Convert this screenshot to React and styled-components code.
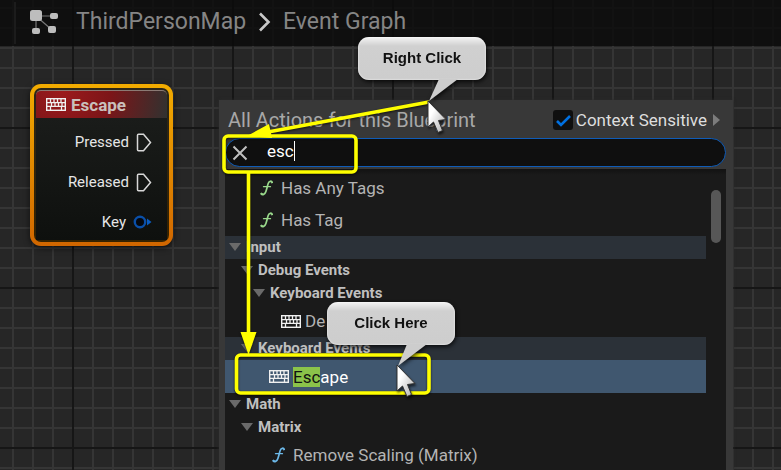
import React from "react";
import styled, { createGlobalStyle } from "styled-components";

const GlobalStyle = createGlobalStyle`
  *, *::before, *::after { box-sizing: border-box; }
  body { margin: 0; font-family: Roboto, "Open Sans", sans-serif; background: #262626; }
`;

/* ---------- Graph canvas ---------- */

const Canvas = styled.main`
  position: relative;
  min-height: 100vh;
  overflow: hidden;
  background-color: #262626;
  background-image:
    linear-gradient(to right, #161616 2px, transparent 2px),
    linear-gradient(to bottom, #161616 2px, transparent 2px),
    linear-gradient(to right, #353535 2px, transparent 2px),
    linear-gradient(to bottom, #353535 2px, transparent 2px);
  background-size: 160px 160px, 160px 160px, 20px 20px, 20px 20px;
  background-position: 72px 0, 0 127px, 12px 0, 0 7px;
`;

const TopBar = styled.header`
  display: flex;
  align-items: center;
  height: 46px;
  padding: 0 14px;
  background: rgba(10, 10, 10, 0.8);
`;

const Divider = styled.span`
  width: 2px;
  height: 42px;
  margin-right: 14px;
  background: #1c1c1c;
`;

const Crumbs = styled.nav`
  display: flex;
  align-items: center;
  gap: 12px;
  margin-left: 18px;
  padding-bottom: 2px;
  font-size: 23px;
  line-height: 28px;
  color: #858585;
`;

/* ---------- Event node ---------- */

const Node = styled.section`
  position: absolute;
  left: 30px;
  top: 84px;
  width: 143px;
  padding: 4px;
  border-radius: 11px;
  background: linear-gradient(#f2ac00, #d06600);
  box-shadow: 0 2px 6px rgba(0, 0, 0, 0.6);
`;

const NodeBody = styled.div`
  overflow: hidden;
  padding: 2px;
  border-radius: 7px;
  background: linear-gradient(#2b2618, #352200);
`;

const NodeTitle = styled.h2`
  display: flex;
  align-items: center;
  gap: 5px;
  height: 28px;
  margin: 0;
  padding: 0 10px;
  border-top: 1px solid #8b7a74;
  border-radius: 5px 5px 0 0;
  background: radial-gradient(circle at 20% 0, #9c1a1c, #7c1518 45%, #303230 100%);
  color: #c9c0bc;
  font-size: 17px;
  line-height: 20px;
`;

const Pins = styled.ul`
  display: flex;
  flex-direction: column;
  gap: 20px;
  margin: 0;
  padding: 14px 15px 8px 8px;
  list-style: none;
  background: linear-gradient(#1a1c1a, #0e100e);
`;

const Pin = styled.li`
  display: flex;
  align-items: center;
  justify-content: flex-end;
  gap: 7px;
  height: 20px;
  color: #e6e6e6;
  font-size: 15px;
  line-height: 20px;
`;

/* ---------- Action menu ---------- */

const Menu = styled.section`
  position: absolute;
  left: 219px;
  right: 48px;
  top: 100px;
  bottom: 0;
  display: flex;
  flex-direction: column;
  padding: 0 7px 0 6px;
  background: #383838;
  box-shadow: 0 0 3px #2a2a2a;
`;

const MenuHeader = styled.div`
  display: flex;
  align-items: center;
  height: 38px;
  padding: 2px 6px 0 3px;
`;

const MenuTitle = styled.h1`
  flex: 1;
  margin: 0;
  color: #a8a8a8;
  font-size: 20px;
  font-weight: 400;
  line-height: 24px;
  white-space: nowrap;
`;

const CheckLabel = styled.label`
  display: flex;
  align-items: center;
  gap: 3px;
  color: #dedede;
  font-size: 17px;
  line-height: 20px;
  white-space: nowrap;
`;

const Check = styled.input`
  appearance: none;
  width: 20px;
  height: 20px;
  margin: 0;
  border-radius: 3px;
  background: #0f0f0f;
  &:checked {
    background: #0f0f0f url("data:image/svg+xml,%3Csvg xmlns='http://www.w3.org/2000/svg' viewBox='0 0 20 20'%3E%3Cpath d='M4 11l4 4 9-9' fill='none' stroke='%230070e0' stroke-width='2.6'/%3E%3C/svg%3E");
  }
`;

const IconButton = styled.button`
  display: flex;
  align-items: center;
  justify-content: center;
  padding: 0;
  border: 0;
  background: none;
`;

const MoreButton = styled(IconButton)`
  margin-left: 6px;
`;

const Search = styled.label`
  display: flex;
  align-items: center;
  height: 29px;
  padding: 0 6px;
  border: 1px solid #0f5cb8;
  border-radius: 15px;
  background: #0f0f0f;
  cursor: text;
`;

const SearchField = styled.span`
  display: flex;
  align-items: center;
  margin-left: 19px;
  padding-bottom: 3px;
`;

const SearchInput = styled.input`
  field-sizing: content;
  padding: 0;
  border: 0;
  outline: 0;
  background: none;
  color: #fff;
  font-family: inherit;
  font-size: 17px;
  line-height: 20px;
`;

const Caret = styled.span`
  width: 1px;
  height: 20px;
  background: #fff;
`;

const ListArea = styled.div`
  display: flex;
  flex: 1;
  min-height: 0;
  margin-top: 2px;
  background: linear-gradient(#121212, #1a1a1a 6px);
`;

const Tree = styled.ul`
  flex: 1;
  height: 100%;
  margin: 0;
  padding: 3px 0 0;
  overflow: hidden;
  list-style: none;
`;

const Category = styled.li`
  display: flex;
  align-items: center;
  gap: 5px;
  height: 23px;
  padding-bottom: 1px;
  padding-left: ${(p) => 4 + p.$level * 12}px;
  background: ${(p) => (p.$shaded ? "#2b3138" : "none")};
  color: #bfbfbf;
  font-size: 15px;
  font-weight: 700;
  line-height: 20px;
`;

const Action = styled.li`
  display: flex;
  align-items: center;
  gap: 4px;
  height: ${(p) => (p.$selected ? 33 : 32)}px;
  padding-left: ${(p) => 32 + p.$level * 12}px;
  background: ${(p) => (p.$selected ? "#40576f" : "none")};
  color: ${(p) => (p.$selected ? "#fff" : "#b4b4b4")};
  font-size: 17px;
  line-height: 20px;
  white-space: nowrap;
`;

const Match = styled.mark`
  background: #8bc34a;
  color: #111;
`;

const ScrollTrack = styled.div`
  width: 20px;
  padding: 21px 5px 0;
`;

const ScrollThumb = styled.div`
  width: 10px;
  height: 53px;
  border-radius: 5px;
  background: #575757;
`;

/* ---------- Tutorial annotations ---------- */

const Marks = styled.svg`
  position: absolute;
  left: 0;
  top: 0;
  pointer-events: none;
  filter: drop-shadow(0 1px 1px rgba(0, 0, 0, 0.7));
`;

const Bubble = styled.div`
  position: absolute;
  left: ${(p) => p.$x}px;
  top: ${(p) => p.$y}px;
  width: 128px;
  height: 43px;
  border-radius: 11px;
  background: linear-gradient(#f4f4f4, #d0d0d0 9px, #cdcdcd);
  box-shadow: inset 0 0 2px #fff;
  filter: drop-shadow(1px 2px 2px rgba(0, 0, 0, 0.75));
  color: #111;
  font-family: "Liberation Sans", Arial, sans-serif;
  font-size: 15px;
  font-weight: 700;
  line-height: 41px;
  text-align: center;
`;

const Tail = styled.svg`
  position: absolute;
  left: ${(p) => p.$x}px;
  top: 42px;
`;

const Pointer = styled.svg`
  position: absolute;
  left: ${(p) => p.$x}px;
  top: ${(p) => p.$y}px;
  filter: drop-shadow(1px 2px 1px rgba(0, 0, 0, 0.6));
`;

/* ---------- Icons ---------- */

function GraphIcon() {
  return (
    <svg width="28" height="26" viewBox="0 0 28 26" fill="#bdbdbd">
      <path d="M6 6h18M6 6v15M6 6l16 14" stroke="#777" strokeWidth="1.2" fill="none" />
      <rect x="0" y="0" width="12" height="11" rx="2.5" />
      <rect x="20" y="3" width="8" height="6" rx="2" />
      <rect x="2" y="18" width="8" height="6" rx="2" />
      <rect x="18" y="16" width="8" height="7" rx="2" />
    </svg>
  );
}

function KeyboardIcon() {
  return (
    <svg width="20" height="13" viewBox="0 0 20 13" fill="none" stroke="#f0f0f0">
      <rect x="0.7" y="0.7" width="18.6" height="11.6" strokeWidth="1.4" />
      <path
        d="M1 4.600H19M1 8.400H19M4.500 1V4.500M8 1V4.500M11.500 1V4.500M15 1V4.500M5.500 4.500V8.500M9 4.500V8.500M12.500 4.500V8.500M16 4.500V8.500M4.500 8.500V12M15.500 8.500V12"
        strokeWidth="1.3"
      />
    </svg>
  );
}

function FunctionIcon({ tone }) {
  return (
    <svg width="20" height="18" viewBox="0 0 20 18" fill="none" stroke={tone} strokeLinecap="round">
      <path d="M15.200 3.300C14.600 1.700 12.200 1.800 11.300 4.200C10.400 6.500 9.800 10 8.800 12.800C7.900 15.500 5.400 16.300 4.200 14.900" strokeWidth="1.7" />
      <path d="M6.500 7.700H13.500" strokeWidth="1.3" />
      <circle cx="14.800" cy="3.400" r="0.6" strokeWidth="1" />
      <circle cx="4.500" cy="14.700" r="0.6" strokeWidth="1" />
    </svg>
  );
}

function ExecPin() {
  return (
    <svg width="16" height="19" viewBox="0 0 16 19">
      <path d="M1.5 2.2q0-1 1-1H7.5L14.5 9.5 7.5 17.8H2.5q-1 0-1-1z" fill="none" stroke="#d8d8d8" strokeWidth="1.5" />
    </svg>
  );
}

function KeyPin() {
  return (
    <svg width="19" height="14" viewBox="0 0 19 14">
      <circle cx="7" cy="7" r="5.2" fill="#05080e" stroke="#0a4fa8" strokeWidth="2.4" />
      <path d="M14 3.500L18.500 7L14 10.500z" fill="#0a5cc0" />
    </svg>
  );
}

function DownTriangle() {
  return (
    <svg width="12" height="8" viewBox="0 0 12 8">
      <path d="M0 0h12L6 8z" fill="#6a6a6a" />
    </svg>
  );
}

function PointerIcon({ x, y }) {
  return (
    <Pointer $x={x} $y={y} width="22" height="35" viewBox="0 0 22 35">
      <defs>
        <linearGradient id="pointer-fill" x1="0" y1="0" x2="1" y2="1">
          <stop offset="0.3" stopColor="#fff" />
          <stop offset="0.8" stopColor="#c4c4c4" />
        </linearGradient>
      </defs>
      <path d="M1 1V27L6.500 22L11 32.500L15.500 30.500L11.500 20.500L19 19.500Z" fill="url(#pointer-fill)" stroke="#333" strokeWidth="1" />
    </Pointer>
  );
}

function Callout({ x, y, tailX, points, children }) {
  return (
    <Bubble $x={x} $y={y}>
      {children}
      <Tail $x={tailX} width="30" height="23" viewBox="0 0 30 23">
        <path d={points} fill="#cdcdcd" />
      </Tail>
    </Bubble>
  );
}

/* ---------- Data ---------- */

const rows = [
  { text: "Has Any Tags", level: 0, tone: "#9ad98c" },
  { text: "Has Tag", level: 0, tone: "#9ad98c" },
  { text: "Input", level: 0, category: true, shaded: true },
  { text: "Debug Events", level: 1, category: true },
  { text: "Keyboard Events", level: 2, category: true },
  { text: "De", level: 2 },
  { text: "Keyboard Events", level: 1, category: true, shaded: true },
  { match: "Esc", text: "ape", level: 1, selected: true },
  { text: "Math", level: 0, category: true },
  { text: "Matrix", level: 1, category: true },
  { text: "Remove Scaling (Matrix)", level: 1, tone: "#6cb8e8" },
];

function Row({ row }) {
  if (row.category) {
    return (
      <Category $level={row.level} $shaded={row.shaded}>
        <DownTriangle />
        {row.text}
      </Category>
    );
  }
  return (
    <Action $level={row.level} $selected={row.selected}>
      {row.tone ? <FunctionIcon tone={row.tone} /> : <KeyboardIcon />}
      <span>
        {row.match && <Match>{row.match}</Match>}
        {row.text}
      </span>
    </Action>
  );
}

export default function App() {
  return (
    <Canvas>
      <GlobalStyle />
      <TopBar>
        <Divider />
        <GraphIcon />
        <Crumbs aria-label="Breadcrumb">
          <span>ThirdPersonMap</span>
          <svg width="13" height="20" viewBox="0 0 13 20">
            <path d="M2 1.500L10.500 10L2 18.500" fill="none" stroke="#c8c8c8" strokeWidth="2.6" />
          </svg>
          <span>Event Graph</span>
        </Crumbs>
      </TopBar>

      <Node>
        <NodeBody>
          <NodeTitle>
            <KeyboardIcon />
            Escape
          </NodeTitle>
          <Pins>
            <Pin>Pressed<ExecPin /></Pin>
            <Pin>Released<ExecPin /></Pin>
            <Pin>Key<KeyPin /></Pin>
          </Pins>
        </NodeBody>
      </Node>

      <Menu>
        <MenuHeader>
          <MenuTitle>All Actions for this Blueprint</MenuTitle>
          <CheckLabel>
            <Check type="checkbox" defaultChecked />
            Context Sensitive
          </CheckLabel>
          <MoreButton aria-label="More options">
            <svg width="7" height="12" viewBox="0 0 7 12">
              <path d="M0 0L7 6L0 12z" fill="#7c7c7c" />
            </svg>
          </MoreButton>
        </MenuHeader>
        <Search>
          <IconButton aria-label="Clear search">
            <svg width="16" height="16" viewBox="0 0 16 16">
              <path d="M1.500 1.500L14.500 14.500M14.500 1.500L1.500 14.500" stroke="#c0c0c0" strokeWidth="2" />
            </svg>
          </IconButton>
          <SearchField>
            <SearchInput aria-label="Search actions" defaultValue="esc" />
            <Caret />
          </SearchField>
        </Search>
        <ListArea>
          <Tree>
            {rows.map((row, i) => (
              <Row key={i} row={row} />
            ))}
          </Tree>
          <ScrollTrack>
            <ScrollThumb />
          </ScrollTrack>
        </ListArea>
      </Menu>

      <Marks width="440" height="400" viewBox="0 0 440 400" fill="none" stroke="#ff0" strokeWidth="3.6">
        <rect x="224" y="136" width="132" height="36" rx="4" />
        <rect x="236.500" y="355" width="192.500" height="38" rx="4" />
        <path d="M429 102L268 132M248.500 172V336" />
        <path d="M247 136L269 124L272 138ZM240.500 332H256.500L248.500 355Z" fill="#ff0" stroke="none" />
      </Marks>

      <Callout x={358} y={37} tailX={70} points="M11 0H30L1 22Z">Right Click</Callout>
      <Callout x={327} y={302} tailX={70} points="M10 0H30L1 22Z">Click Here</Callout>
      <PointerIcon x={427} y={100} />
      <PointerIcon x={396} y={364} />
    </Canvas>
  );
}
